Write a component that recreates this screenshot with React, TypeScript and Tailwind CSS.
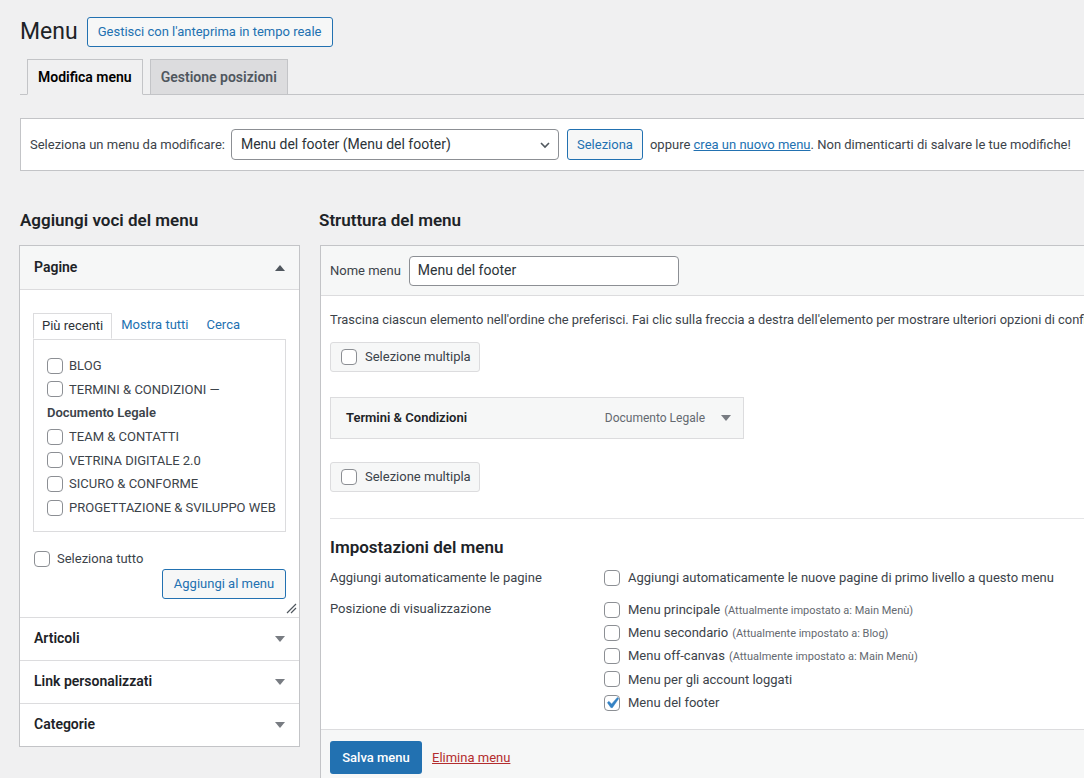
import React from 'react';

function Check({ checked = false }: { checked?: boolean }) {
  return (
    <span className="inline-flex h-4 w-4 shrink-0 items-center justify-center rounded-[4px] border border-[#8c8f94] bg-white">
      {checked && (
        <svg viewBox="0 0 20 20" className="h-[22px] w-[22px] shrink-0">
          <path d="M14.83 4.89l1.34.94-5.81 8.38H9.02L5.78 9.67l1.34-1.25 2.57 2.4z" fill="#3582c4" stroke="#3582c4" strokeWidth="0.4" />
        </svg>
      )}
    </span>
  );
}

function Arrow({ up = false }: { up?: boolean }) {
  return (
    <svg width="10" height="6" viewBox="0 0 10 6" className="shrink-0">
      {up ? <polygon points="0,6 10,6 5,0" fill="#50575e" /> : <polygon points="0,0 10,0 5,6" fill="#787c82" />}
    </svg>
  );
}

const pages = ['BLOG', 'TERMINI & CONDIZIONI', 'TEAM & CONTATTI', 'VETRINA DIGITALE 2.0', 'SICURO & CONFORME', 'PROGETTAZIONE & SVILUPPO WEB'];

const locations = [
  { name: 'Menu principale', note: '(Attualmente impostato a: Main Menù)' },
  { name: 'Menu secondario', note: '(Attualmente impostato a: Blog)' },
  { name: 'Menu off-canvas', note: '(Attualmente impostato a: Main Menù)' },
  { name: 'Menu per gli account loggati', note: '' },
  { name: 'Menu del footer', note: '', checked: true },
];

export default function App() {
  return (
    <div className="h-[778px] w-[1084px] overflow-hidden bg-[#f0f0f1] pl-5 pt-[17px] font-['Roboto',sans-serif] text-[13px] text-[#3c434a]">
      {/* Title */}
      <div className="flex items-center gap-[9px]">
        <h1 className="text-[23px] leading-[30px] text-[#1d2327]">Menu</h1>
        <button className="h-[30px] rounded-[3px] border border-[#2271b1] bg-[#f6f7f7] px-[10px] text-[13px] text-[#2271b1]">
          Gestisci con l'anteprima in tempo reale
        </button>
      </div>

      {/* Tabs */}
      <div className="mt-[12px] flex gap-[7px] border-b border-[#c3c4c7] pl-[7px]">
        <div className="-mb-px h-[36px] border border-[#c3c4c7] border-b-[#f0f0f1] bg-[#f0f0f1] px-[10px] text-[14px] font-semibold leading-[34px] text-[#000]">
          Modifica menu
        </div>
        <div className="-mb-px h-[36px] border border-[#c3c4c7] bg-[#dcdcde] px-[10px] text-[14px] font-semibold leading-[34px] text-[#50575e]">
          Gestione posizioni
        </div>
      </div>

      {/* Select menu box */}
      <div className="mt-[23px] flex h-[53px] w-[1100px] items-center whitespace-nowrap border border-[#c3c4c7] bg-white pl-[9px]">
        <span>Seleziona un menu da modificare:</span>
        <div className="ml-[6px] flex h-[31px] w-[328px] items-center justify-between rounded-[4px] border border-[#8c8f94] bg-white pl-[9px] pr-[6px] text-[14px] text-[#2c3338]">
          <span>Menu del footer (Menu del footer)</span>
          <svg width="14" height="14" viewBox="0 0 14 14">
            <path d="M3 5l4 4 4-4" fill="none" stroke="#50575e" strokeWidth="1.6" />
          </svg>
        </div>
        <button className="ml-[8px] h-[31px] w-[76px] rounded-[3px] border border-[#2271b1] bg-[#f6f7f7] text-[13px] text-[#2271b1]">
          Seleziona
        </button>
        <span className="ml-[7px]">
          oppure <a className="text-[#2271b1] underline">crea un nuovo menu</a>. Non dimenticarti di salvare le tue modifiche!
        </span>
      </div>

      <div className="mt-[37px] flex gap-[20px]">
        {/* Left column */}
        <div className="-ml-px w-[281px] shrink-0">
          <h2 className="pl-px text-[17px] font-semibold leading-[24px] text-[#1d2327]">Aggiungi voci del menu</h2>
          <div className="mt-[13px] border border-[#c3c4c7] bg-white">
            <div className="flex h-[43px] items-center justify-between bg-[#f6f7f7] px-[14px] text-[14px] font-semibold text-[#1d2327]">
              <span>Pagine</span>
              <Arrow up />
            </div>
            <div className="relative border-t border-[#dcdcde] px-[13px] pb-[18px] pt-[23px]">
              <div className="flex">
                <div className="-mb-px h-[26px] border border-[#dcdcde] border-b-white bg-white px-[8px] leading-[24px] text-[#2c3338]">Più recenti</div>
                <div className="h-[26px] px-[9px] leading-[24px] text-[#2271b1]">Mostra tutti</div>
                <div className="h-[26px] px-[9px] leading-[24px] text-[#2271b1]">Cerca</div>
              </div>
              <div className="border border-[#dcdcde] pb-[11px] pl-[13px] pr-[4px] pt-[14px]">
                {pages.map((p) => (
                  <div key={p} className="whitespace-nowrap">
                    <div className="flex h-[23.67px] items-center">
                      <Check />
                      <span className="ml-[6px]">{p === 'TERMINI & CONDIZIONI' ? `${p} —` : p}</span>
                    </div>
                    {p === 'TERMINI & CONDIZIONI' && (
                      <div className="flex h-[23.67px] items-center font-semibold text-[#3c434a]">Documento Legale</div>
                    )}
                  </div>
                ))}
              </div>
              <div className="mt-[17px] flex h-[20px] items-center gap-[7px] pl-px">
                <Check />
                <span>Seleziona tutto</span>
              </div>
              <div className="flex justify-end">
                <button className="h-[30px] w-[124px] rounded-[3px] border border-[#2271b1] bg-[#f6f7f7] text-[13px] text-[#2271b1]">
                  Aggiungi al menu
                </button>
              </div>
              <svg width="12" height="12" viewBox="0 0 12 12" className="absolute bottom-[3px] right-[2px]">
                <path d="M2 11L11 2M6 11L11 6" stroke="#50575e" strokeWidth="1.2" />
              </svg>
            </div>
            {['Articoli', 'Link personalizzati', 'Categorie'].map((t) => (
              <div key={t} className="flex h-[43px] items-center justify-between border-t border-[#dcdcde] px-[14px] text-[14px] font-semibold text-[#1d2327]">
                <span>{t}</span>
                <Arrow />
              </div>
            ))}
          </div>
        </div>

        {/* Right column */}
        <div className="w-[800px] shrink-0">
          <h2 className="-ml-px text-[17px] font-semibold leading-[24px] text-[#1d2327]">Struttura del menu</h2>
          <div className="mt-[13px] border border-[#c3c4c7] bg-white">
            <div className="flex h-[50px] items-center gap-[8px] border-b border-[#dcdcde] bg-[#f6f7f7] pl-[9px]">
              <span>Nome menu</span>
              <div className="flex h-[30px] w-[270px] items-center rounded-[4px] border border-[#8c8f94] bg-white pl-[8px] text-[14px] text-[#2c3338]">
                Menu del footer
              </div>
            </div>
            <div className="px-[9px] pb-[15px] pt-[14px]">
              <p className="whitespace-nowrap text-[12.9px] leading-[20px]">
                Trascina ciascun elemento nell'ordine che preferisci. Fai clic sulla freccia a destra dell'elemento per mostrare ulteriori opzioni di configurazione.
              </p>
              <div className="mt-[12px] flex h-[30px] w-[150px] items-center gap-[8px] whitespace-nowrap rounded-[3px] border border-[#dcdcde] bg-[#f6f7f7] px-[10px]">
                <Check />
                <span>Selezione multipla</span>
              </div>
              <div className="mt-[25px] flex h-[42px] w-[414px] items-center border border-[#dcdcde] bg-[#f6f7f7] pl-[15px] pr-[12px]">
                <span className="font-semibold text-[#1d2327]">Termini &amp; Condizioni</span>
                <span className="ml-auto text-[12px] text-[#646970]">Documento Legale</span>
                <span className="ml-[16px]">
                  <Arrow />
                </span>
              </div>
              <div className="mt-[23px] flex h-[30px] w-[150px] items-center gap-[8px] whitespace-nowrap rounded-[3px] border border-[#dcdcde] bg-[#f6f7f7] px-[10px]">
                <Check />
                <span>Selezione multipla</span>
              </div>
              <div className="mt-[26px] border-t border-[#e5e5e7]" />
              <h3 className="mt-[16px] text-[17px] font-semibold leading-[24px] text-[#1d2327]">Impostazioni del menu</h3>
              <div className="mt-[9px] flex h-[20px] items-center">
                <span className="w-[274px] shrink-0">Aggiungi automaticamente le pagine</span>
                <div className="flex items-center gap-[8px] text-[#3c434a]">
                  <Check />
                  <span>Aggiungi automaticamente le nuove pagine di primo livello a questo menu</span>
                </div>
              </div>
              <div className="mt-[10px] flex">
                <span className="w-[274px] shrink-0 leading-[22px]">Posizione di visualizzazione</span>
                <div>
                  {locations.map((l) => (
                    <div key={l.name} className="flex h-[23.25px] items-center gap-[8px] whitespace-nowrap">
                      <Check checked={l.checked} />
                      <span>
                        {l.name}
                        {l.note && <span className="ml-[4px] text-[11px] text-[#646970]">{l.note}</span>}
                      </span>
                    </div>
                  ))}
                </div>
              </div>
            </div>
            <div className="flex h-[60px] items-start gap-[10px] border-t border-[#dcdcde] bg-[#f6f7f7] pl-[9px] pt-[11px]">
              <button className="h-[33px] w-[92px] rounded-[3px] bg-[#2271b1] text-[13px] font-medium text-white">Salva menu</button>
              <a className="mt-[7px] text-[#b32d2e] underline">Elimina menu</a>
            </div>
          </div>
        </div>
      </div>
    </div>
  );
}
